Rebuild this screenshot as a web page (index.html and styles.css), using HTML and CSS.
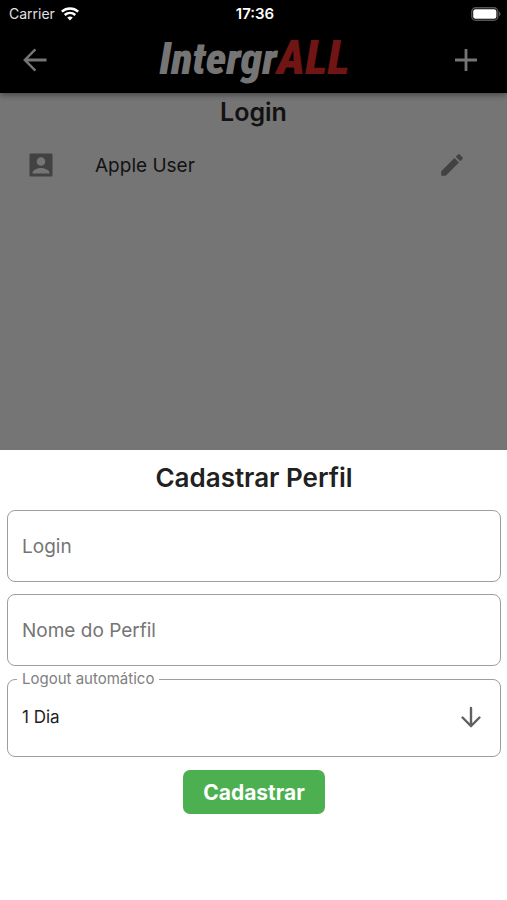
FILE: index.html
```html
<!DOCTYPE html>
<html lang="pt-BR">
<head>
<meta charset="utf-8">
<meta name="viewport" content="width=device-width, initial-scale=1">
<title>IntergrALL</title>
<link rel="stylesheet" href="styles.css">
</head>
<body>
<div class="screen">
  <div class="backdrop">
    <header class="top">
      <div class="status">
        <div class="carrier">
          <span>Carrier</span>
          <svg width="18" height="14" viewBox="0 0 18 14" fill="none" stroke="#fff" stroke-width="2.5" aria-hidden="true">
            <path d="M.8 4.600C5.600.4 12.400.4 17.200 4.600"/>
            <path d="M3.700 8c3.100-2.800 7.500-2.800 10.600 0"/>
            <path d="M6.200 10.600c1.700-1.400 3.900-1.400 5.600 0L9 13.400z" fill="#fff" stroke="none"/>
          </svg>
        </div>
        <time class="clock">17:36</time>
        <svg class="battery" width="30" height="14" viewBox="0 0 30 14" aria-hidden="true">
          <rect x=".8" y=".8" width="26" height="12.4" rx="3.8" fill="none" stroke="#555" stroke-width="1.4"/>
          <rect x="2.2" y="2.2" width="23.2" height="9.6" rx="2.4" fill="#fff"/>
          <path d="M28 4.8c2 .6 2 3.8 0 4.4z" fill="#555"/>
        </svg>
      </div>
      <div class="appbar">
        <button class="icon-button" type="button" aria-label="Voltar">
          <svg width="38" height="38" viewBox="0 0 24 24" fill="#757575"><path d="M19.300 11.100H7.600l5.200-5.200L11.700 4.700 4.500 12l7.200 7.300 1.100-1.200-5.200-5.200h11.700z"/></svg>
        </button>
        <div class="logo">Intergr<span class="logo-accent">ALL</span></div>
        <button class="icon-button" type="button" aria-label="Adicionar">
          <svg width="38" height="38" viewBox="0 0 38 38" fill="none" stroke="#757575" stroke-width="2.8"><path d="M19 8v22M8 19h22"/></svg>
        </button>
      </div>
    </header>
    <main class="profiles">
      <h1 class="title">Login</h1>
      <div class="profile">
        <svg width="30" height="30" viewBox="0 0 30 30" fill="#424242" aria-hidden="true"><path fill-rule="evenodd" d="M4.500 3.500h21q1 0 1 1v21q0 1-1 1h-21q-1 0-1-1v-21q0-1 1-1zM15 7.200a4.300 4.300 0 1 0 0 8.600 4.300 4.300 0 0 0 0-8.600zM6.500 23.500h17v-.8c0-3-5.500-4.700-8.500-4.700s-8.500 1.700-8.500 4.700z"/></svg>
        <span class="profile-name">Apple User</span>
        <button class="edit" type="button" aria-label="Editar">
          <svg width="30" height="30" viewBox="-.5 -.5 25 25" fill="#424242"><path d="M3 17.250V21h3.750L17.810 9.940l-3.750-3.750L3 17.250zM20.710 7.040c.39-.39.39-1.020 0-1.410l-2.340-2.340c-.39-.39-1.020-.39-1.410 0l-1.830 1.830 3.750 3.750 1.830-1.830z"/></svg>
        </button>
      </div>
    </main>
  </div>
  <form class="sheet">
    <h2 class="title title-large">Cadastrar Perfil</h2>
    <div class="field">
      <input class="input" id="login" type="text" placeholder=" ">
      <label class="label" for="login">Login</label>
    </div>
    <div class="field">
      <input class="input" id="nome" type="text" placeholder=" ">
      <label class="label" for="nome">Nome do Perfil</label>
    </div>
    <fieldset class="outline">
      <legend class="legend"><label for="logout">Logout automático</label></legend>
      <div class="picker">
        <select class="select" id="logout"><option>1 Dia</option></select>
        <svg class="arrow" width="22" height="22" viewBox="0 0 22 22" fill="none" stroke="#616161" stroke-width="2.4" stroke-linecap="round" aria-hidden="true"><path d="M11 2v18M2.500 11.500 11 20l8.500-8.500"/></svg>
      </div>
    </fieldset>
    <button class="submit" type="button">Cadastrar</button>
  </form>
</div>
</body>
</html>
```
FILE: styles.css
```css
* {
  box-sizing: border-box;
}

body {
  margin: 0;
  font-family: Inter, "Liberation Sans", sans-serif;
  color: #212121;
  background: #fff;
}

button {
  border: 0;
  padding: 0;
  background: none;
  font: inherit;
}

svg {
  display: block;
}

.screen {
  min-height: 100vh;
  display: grid;
  grid-template-rows: 1fr 1fr;
}

.backdrop {
  background: #757575;
  color: #121212;
}

.top {
  background: #000;
  box-shadow: 0 2px 6px rgba(0, 0, 0, 0.4);
}

.status {
  display: grid;
  grid-template-columns: 1fr auto 1fr;
  align-items: center;
  height: 27px;
  padding: 0 6px 0 9px;
  color: #fff;
  font-size: 15px;
}

.carrier {
  display: flex;
  align-items: center;
  gap: 6px;
  font-size: 14px;
  color: #e0e0e0;
}

.clock {
  font-weight: 600;
}

.battery {
  justify-self: end;
}

.appbar {
  display: flex;
  align-items: center;
  justify-content: space-between;
  height: 66px;
  padding: 0 22px 0 16px;
}

.logo {
  padding: 0 0 4px 8px;
  font-family: "Roboto Condensed", "Liberation Sans Narrow", "Liberation Sans", sans-serif;
  font-size: 44px;
  font-weight: 900;
  font-style: italic;
  line-height: 48px;
  color: #757575;
}

.logo-accent {
  font-size: 48px;
  color: #701414;
}

.title {
  margin: 0;
  font-size: 25px;
  font-weight: 600;
  line-height: 30px;
  text-align: center;
}

.profiles {
  padding-top: 4px;
}

.profile {
  display: flex;
  align-items: center;
  height: 76px;
  padding: 0 40px 0 26px;
}

.profile-name {
  flex: 1;
  padding-left: 39px;
  font-size: 19px;
}

.sheet {
  display: flex;
  flex-direction: column;
  padding: 13px 6px 12px 7px;
  background: #fff;
}

.title-large {
  margin-bottom: 17px;
  font-size: 26px;
}

.field {
  display: grid;
  margin-bottom: 12px;
}

.input,
.label {
  grid-area: 1 / 1;
  font-size: 19px;
}

.input {
  width: 100%;
  height: 72px;
  padding: 0 15px;
  border: 1px solid #9e9e9e;
  border-radius: 8px;
  background: none;
  font-family: inherit;
  color: inherit;
}

.label {
  align-self: center;
  justify-self: start;
  padding-left: 15px;
  color: #757575;
  pointer-events: none;
}

.input:not(:placeholder-shown) + .label {
  visibility: hidden;
}

.outline {
  min-width: 0;
  margin: 0 0 13px;
  padding: 0 14px 0 9px;
  border: 1px solid #9e9e9e;
  border-radius: 8px;
}

.legend {
  padding: 0 5px;
  font-size: 15px;
  line-height: 18px;
  color: #808080;
}

.field + .outline {
  margin-top: -8px;
}

.picker {
  display: grid;
  align-items: center;
  padding: 9px 0 19px;
}

.select,
.arrow {
  grid-area: 1 / 1;
}

.select {
  width: 100%;
  height: 40px;
  padding: 0 0 0 5px;
  border: 0;
  appearance: none;
  background: none;
  font-family: inherit;
  font-size: 17px;
  color: #212121;
}

.arrow {
  justify-self: end;
  margin-right: 4px;
  pointer-events: none;
}

.submit {
  align-self: center;
  height: 44px;
  padding: 0 20px;
  border-radius: 7px;
  background: #4caf50;
  color: #fff;
  font-size: 21px;
  font-weight: 700;
}
```
